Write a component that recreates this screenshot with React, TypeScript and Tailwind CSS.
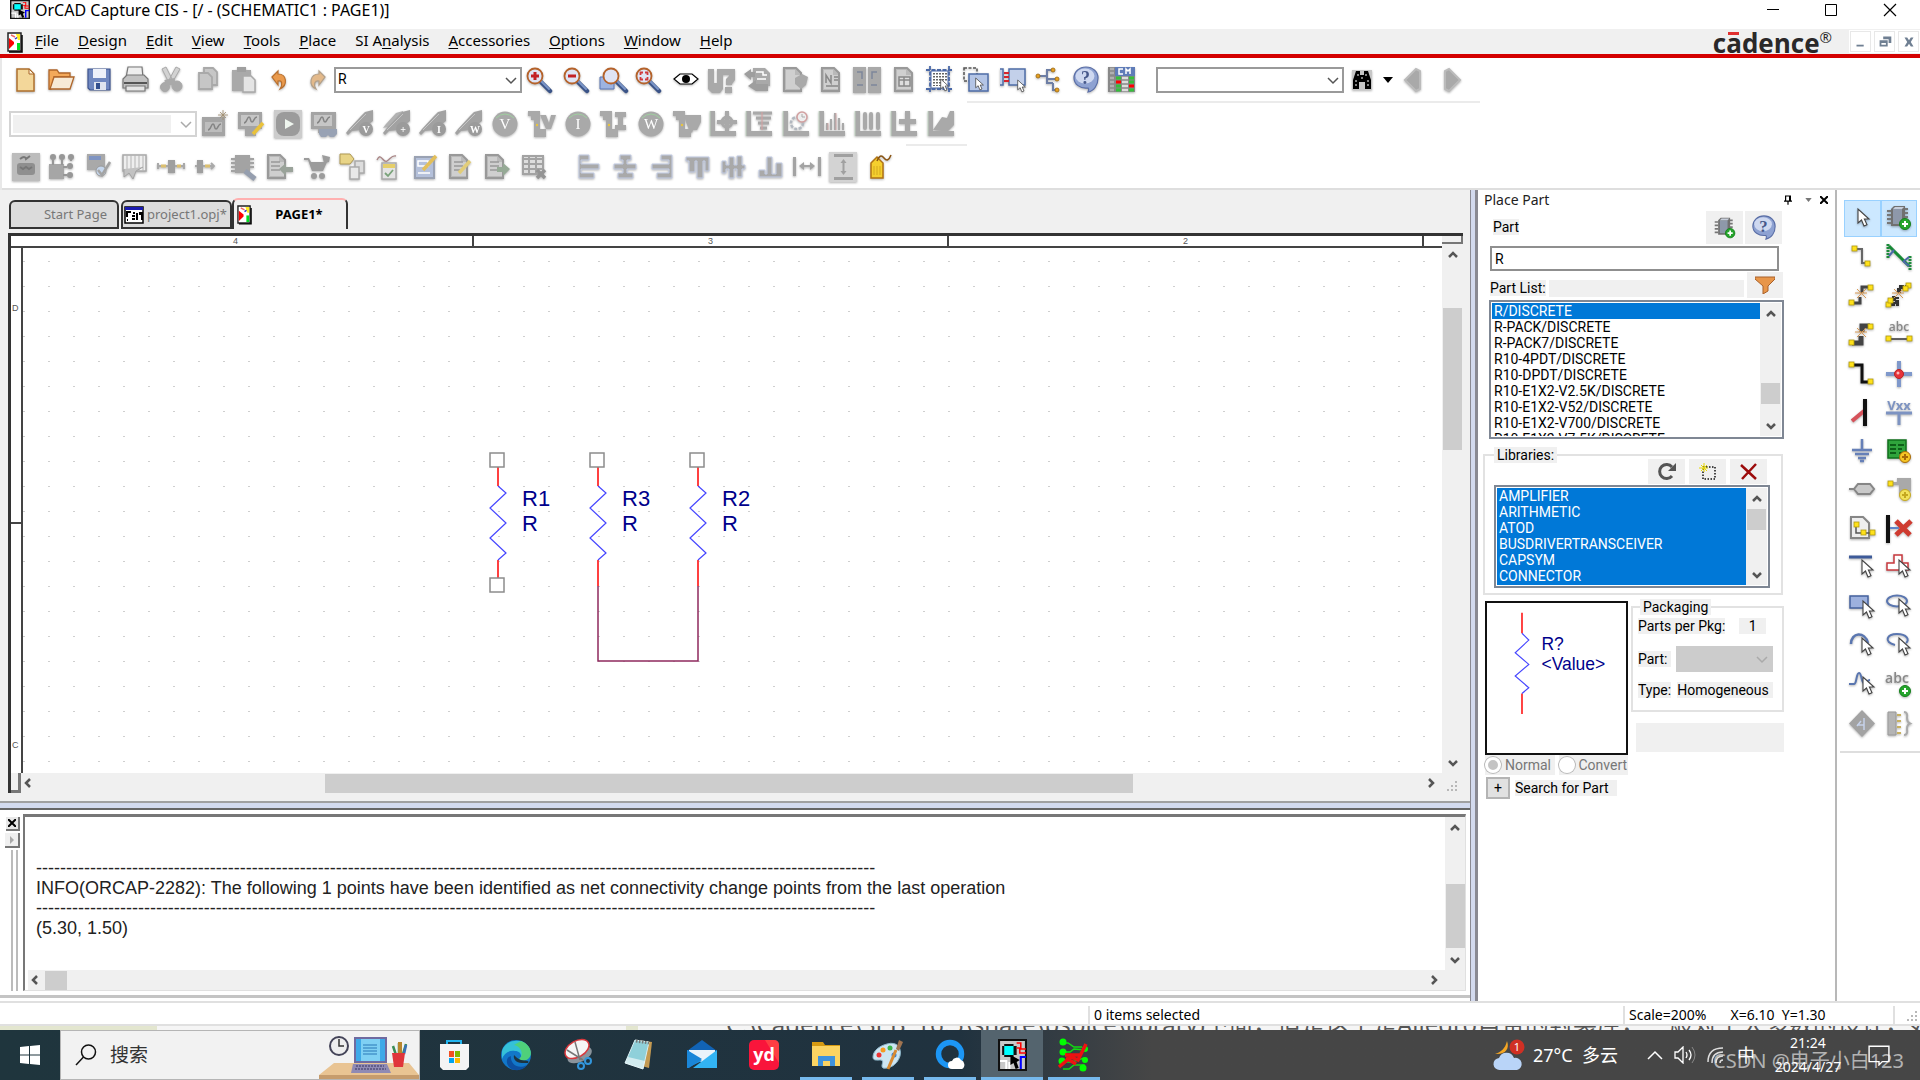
import type { ReactNode } from 'react';

const G = '#a9a9a9';
const UI = "font-['Noto_Sans','Open_Sans',sans-serif]";
const PANEL = "font-['Roboto','Liberation_Sans',sans-serif] text-[14px]";
const CJK = "font-['Noto_Sans','Noto_Sans_CJK_SC',sans-serif]";

/* ---------- shared icon fragments ---------- */

const Cursor = ({ x = 12, y = 6 }: { x?: number; y?: number }) => (
  <path
    transform={`translate(${x} ${y})`}
    d="M1 0v14l3.5-3 2.5 6 3-1.3-2.6-5.7H12z"
    fill="#fff"
    stroke="#444"
    strokeWidth="1.1"
  />
);

const Lens = ({ children, x = 9 }: { children?: ReactNode; x?: number }) => (
  <g>
    <path d={`M${x + 6} 16l9 9`} stroke="#3b5488" strokeWidth="4.500" strokeLinecap="round" />
    <path d={`M${x + 6} 15l8 8`} stroke="#7b95c8" strokeWidth="2" strokeLinecap="round" />
    <circle cx={x} cy="10" r="7.500" fill="#dfe4f5" stroke="#b5622a" strokeWidth="1.800" />
    {children}
  </g>
);

const Sq = ({ x, y }: { x: number; y: number }) => (
  <rect x={x} y={y} width="5" height="5" fill="#ffe11a" stroke="#b09a10" strokeWidth=".8" />
);

const Probe = ({ t }: { t: string }) => (
  <g>
    <path d="M0 23l3-4L15 6l4-4 8-2v11L15 20l-9 1-4 4z" fill="#a2a2a2" />
    <path d="M4 20L20 4" stroke="#c4c4c4" strokeWidth="1" />
    <circle cx="20" cy="19" r="7" fill="#9b9b9b" />
    <text x="20" y="23" textAnchor="middle" fontSize="10" fontWeight="700" fill="#fff" fontFamily="Liberation Serif">
      {t}
    </text>
  </g>
);

const Round = ({ t }: { t: string }) => (
  <g>
    <circle cx="14" cy="14" r="12.500" fill={G} />
    <path d="M5 8q9-8 18 0" fill="none" stroke="#9fd09f" strokeWidth="1" />
    <text x="14" y="19" textAnchor="middle" fontSize="15" fill="#fff" fontFamily="Liberation Serif">
      {t}
    </text>
  </g>
);

const Branch = ({ children }: { children: ReactNode }) => (
  <g fill={G}>
    <path d="M0 1h12v18h6v8H6V10H3V6H0z" />
    <circle cx="9" cy="15" r="1.200" fill="#e8c440" />
    {children}
  </g>
);

const Axis = ({ children }: { children: ReactNode }) => (
  <g fill={G}>
    <path d="M1 1h5v20h21v5H1z" />
    <path d="M1 1v25" stroke="#c5dcc5" strokeWidth=".8" />
    {children}
  </g>
);

const Page = ({ children, x = 5 }: { children?: ReactNode; x?: number }) => (
  <g>
    <path d={`M${x} 2h12l5 5v18H${x}z`} fill="#b9b9b9" stroke="#999" strokeWidth="2" />
    <path d={`M${x + 2} 4h9v5h5v14H${x + 2}z`} fill="#cfcfcf" />
    {children}
  </g>
);

const Chip = ({ c = '#8e98aa' }: { c?: string }) => (
  <g>
    <path d="M2 7h4M2 11h4M2 15h4M2 19h4M19 5h4M19 9h4M19 13h4" stroke="#777" strokeWidth="2" />
    <path d="M6 5l3-3h11v17l-3 3H6z" fill="#707070" />
    <path d="M8 5h9v15H8z" fill={c} />
    <path d="M8 5h9l2-2H10z" fill="#c7cedb" />
  </g>
);

const Plus = ({ x, y, c = '#25a52c', s = '#fff' }: { x: number; y: number; c?: string; s?: string }) => (
  <g>
    <circle cx={x} cy={y} r="5.500" fill={c} stroke={s === '#fff' ? '#15801c' : s} strokeWidth="1" />
    <path d={`M${x - 3} ${y}h6M${x} ${y - 3}v6`} stroke={s} strokeWidth="2" />
  </g>
);

const Help = () => (
  <g>
    <path d="M14 1c7 0 12 5 12 11 0 7-4 13-10 14 1-2 1-3 0-4C8 23 2 18 2 12S7 1 14 1z" fill="#8ea2d2" stroke="#5a6ea6" strokeWidth="1.200" />
    <ellipse cx="13" cy="10" rx="9.500" ry="7.500" fill="#dfe6f7" opacity=".8" />
    <text x="13.500" y="18" textAnchor="middle" fontSize="18" fontWeight="700" fill="#46588a" fontFamily="Liberation Serif">
      ?
    </text>
  </g>
);

const icons: Record<string, ReactNode> = {
  New: (
    <g>
      <path d="M5 3h12l5 5v17H5z" fill="#f3d79a" stroke="#b0722f" strokeWidth="1.500" />
      <path d="M17 3v5h5z" fill="#fff5dc" stroke="#a8672c" />
    </g>
  ),
  Open: (
    <g stroke="#b0662a" strokeWidth="1.300">
      <path d="M1 4h8l2 3h11v4H6L3 23H1z" fill="#f3a95a" />
      <path d="M6 11h20l-4 12H2z" fill="#f7ead6" />
    </g>
  ),
  Save: (
    <g>
      <path d="M3 3h22v21H5l-2-2z" fill="#7088c0" stroke="#3c5490" strokeWidth="1.200" />
      <path d="M8 3h13v9H8z" fill="#eef1fa" />
      <path d="M9 16h12v8H9z" fill="#dfe4ef" />
      <path d="M11 17h4v6h-4z" fill="#33508f" />
    </g>
  ),
  Print: (
    <g stroke="#777" strokeWidth="1.200">
      <path d="M7 1h14l1 11H5z" fill="#eee" />
      <path d="M2 13l4-4h17l4 4v9H2z" fill="#c2c2c2" />
      <path d="M5 20h19v5H5z" fill="#e6e6e6" />
      <path d="M3 17h23" stroke="#555" strokeWidth="2" />
    </g>
  ),
  Cut: (
    <g fill={G} stroke={G}>
      <path d="M5 3l4-2 6 12-3 4zM23 3l-4-2-7 13 3 3z" fill="#d2d2d2" />
      <circle cx="8" cy="21" r="4.500" />
      <circle cx="20" cy="20" r="5" />
      <path d="M8 17l10-2" strokeWidth="6" />
    </g>
  ),
  Copy: (
    <g fill="#c6c6c6" stroke="#a9a9a9" strokeWidth="1.800">
      <path d="M11 2h9l4 4v13H11z" />
      <path d="M6 7h9l4 4v12H6z" />
    </g>
  ),
  Paste: (
    <g>
      <path d="M3 4h19v21H3z" fill={G} />
      <path d="M8 1h9v5H8z" fill="#9f9f9f" />
      <path d="M14 10h8l4 4v12H14z" fill="#e4e4e4" stroke={G} strokeWidth="1.500" />
    </g>
  ),
  Undo: <path d="M6 11l6-6v3c9 0 10 11 2 15 3-5 2-9-2-8v4z" fill="#ea9a4c" stroke="#b8702f" strokeWidth="1.200" />,
  Redo: <path d="M23 11l-6-6v3c-9 0-11 11-3 15-3-5-1-9 3-8v4z" fill="#e3b98a" stroke="#b3a089" strokeWidth="1.200" />,
  'Zoom In': (
    <Lens>
      <path d="M5 10h8M9 6v8" stroke="#c32026" strokeWidth="3" />
    </Lens>
  ),
  'Zoom Out': (
    <Lens>
      <path d="M5 10h8" stroke="#c32026" strokeWidth="3" />
    </Lens>
  ),
  'Zoom to Region': (
    <g>
      <path d="M1 11h14v12H1z" fill="#9db3e0" stroke="#5b77b5" />
      <Lens x={12} />
    </g>
  ),
  'Zoom to All': (
    <Lens>
      <path d="M5.500 9V6.500H8M10 6.500h2.500V9M12.500 11v2.500H10M8 13.500H5.500V11" fill="none" stroke="#d0383e" strokeWidth="1.800" />
    </Lens>
  ),
  View: (
    <g>
      <path d="M2 13l6-5h12l6 5-6 5H8z" fill="#fff" stroke="#000" strokeWidth="1.200" />
      <circle cx="14" cy="13" r="4" />
    </g>
  ),
  Annotate: (
    <g fill={G}>
      <path d="M0 3h6v14h3V3h6v20l-3 4H4l-4-4zM15 3h12v11l-3 4v1h-6v-6l3-3V9h-6zM17 21h7v6h-7z" />
    </g>
  ),
  'Back Annotate': (
    <g>
      <path d="M9 2h12l5 5v13H9z" fill={G} />
      <path d="M12 6h7v3h4M13 13h9" stroke="#fff" strokeWidth="1.500" fill="none" />
      <path d="M0 8l7-5v3h4v5H7v3zM4 20l8-6v4h12v7H12z" fill="#9e9e9e" />
    </g>
  ),
  'Design Rules': (
    <Page x={3}>
      <path d="M14 12l7-4 6 3-2 8-5 4-6-5z" fill={G} />
    </Page>
  ),
  Netlist: (
    <Page>
      <path d="M9 17V9l5 8V9M17 11h4M17 14h4M9 20h12" stroke="#888" strokeWidth="1.500" fill="none" />
    </Page>
  ),
  'Cross Reference': (
    <g fill={G}>
      <path d="M0 1h13v26H0zM15 1h13v26H15z" />
      <path d="M4 6h5v7M24 6h-5v7M4 19h6M18 19h6" stroke="#7d869a" strokeWidth="1.500" fill="none" />
    </g>
  ),
  'Bill of Materials': (
    <Page>
      <path d="M9 11h11v9H9zM9 14h11M14 11v9" stroke="#888" strokeWidth="1.500" fill="#ddd" />
    </Page>
  ),
  'Snap to Grid': (
    <g>
      <path d="M4 0v27M23 0v27M0 4h27M0 23h27" stroke="#4a69a8" strokeWidth="1.800" strokeDasharray="4 1.500" />
      <path d="M5 5h17v17H5z" fill="#fff" stroke="#4a69a8" />
      <path d="M8 7v13M11 7v13M14 7v13M17 7v13M20 7v8" stroke="#333" strokeWidth="1.500" strokeDasharray="1.500 1.500" />
      <g transform="translate(14 13) scale(.7)">
        <Cursor x={0} y={0} />
      </g>
    </g>
  ),
  'Area Select': (
    <g>
      <path d="M2 2h13v13H2z" fill="none" stroke="#555" strokeWidth="1.500" strokeDasharray="3 1.500" />
      <path d="M7 8h19v17H7z" fill="#b4c5e6" stroke="#4f6da8" strokeWidth="1.500" />
      <g transform="translate(13 12) scale(.7)">
        <Cursor x={0} y={0} />
      </g>
    </g>
  ),
  'Drag Connected': (
    <g>
      <path d="M1 3h3v16H1M26 3H10v16h16z" fill="#c3d0ea" stroke="#4f6da8" strokeWidth="1.500" />
      <path d="M5 7h5M5 11h5M5 15h5" stroke="#d6242c" strokeWidth="1.800" />
      <g transform="translate(18 14) scale(.7)">
        <Cursor x={0} y={0} />
      </g>
    </g>
  ),
  Hierarchy: (
    <g>
      <path d="M3 10h9M18 4h-6v13h6M12 13h10M18 17v7h4" fill="none" stroke="#6d7ea5" strokeWidth="2" />
      <g fill="#e6a020" stroke="#9c6810" strokeWidth=".8">
        <circle cx="3" cy="10" r="2" />
        <circle cx="18" cy="4" r="2" />
        <circle cx="22" cy="13" r="2" />
        <circle cx="22" cy="24" r="2" />
      </g>
    </g>
  ),
  Help: <Help />,
  'Constraint Manager': (
    <g>
      <path d="M0 1h27v25H0z" fill="#888" />
      <path d="M7 1h20v9H7z" fill="#5f7cb8" />
      <path d="M15 3h-4v5h4M18 8V3l2 2 2-2v5" stroke="#fff" strokeWidth="1.500" fill="none" />
      <path d="M2 3h4M2 7h4M2 12h4M2 16h4M2 20h4M2 24h4" stroke="#b0b0b0" strokeWidth="2.500" />
      <path d="M8 12h5M8 20h5M8 24h5M21 12h5M21 16h5M21 24h5" stroke="#35bf3b" strokeWidth="2.800" />
      <path d="M14 12h6M14 16h6M14 20h6M14 24h6" stroke="#ddd" strokeWidth="2.500" />
      <path d="M8 16h5M21 20h5" stroke="#f00" strokeWidth="2.800" />
    </g>
  ),
  Find: (
    <g>
      <path d="M4 4h20v20H4z" fill="#c6c6c6" />
      <path d="M8 5h4v4h4V5h4l3 9v9h-6v-7h-6v7H5v-9z" />
      <path d="M8 14v7M20 14v7M10 8v3M18 8v3M13 12h2" stroke="#fff" strokeDasharray="2 2" />
    </g>
  ),
  Previous: <path d="M5 14L16 3l4 2v18l-4 2z" fill={G} stroke="#bbb" strokeWidth="2" />,
  Next: <path d="M23 14L12 3 8 5v18l4 2z" fill={G} stroke="#bbb" strokeWidth="2" />,

  'New Simulation': (
    <g>
      <path d="M1 7h23v19H1z" fill="#a4a4a4" />
      <path d="M4 12h17v10H4z" fill="#bdbdbd" />
      <path d="M7 20c3 0 3-6 5-6s1 5 3 5 2-5 5-5" fill="none" stroke="#848484" strokeWidth="1.500" />
      <path d="M22 0v10M17 5h10M19 2l6 6M25 2l-6 6" stroke="#a08c6c" strokeWidth=".8" />
    </g>
  ),
  'Edit Simulation': (
    <g>
      <path d="M1 2h24v17H1zM8 19h11v7H8z" fill="#a4a4a4" />
      <path d="M4 5h18v11H4z" fill="#c6c6c6" />
      <path d="M7 13c3 0 3-6 5-6s1 5 3 5 2-5 5-5" fill="none" stroke="#848484" strokeWidth="1.500" />
      <path d="M16 24l10-11" stroke="#eac23a" strokeWidth="3.500" />
    </g>
  ),
  Run: (
    <g>
      <path d="M0 0h28v28H0z" fill="#cccccc" />
      <rect x="2" y="2" width="24" height="24" rx="8" fill="#9b9b9b" />
      <path d="M11 9l9 5-9 5z" fill="#eef5ee" />
    </g>
  ),
  'View Results': (
    <g>
      <path d="M1 2h25v17H1zM8 19h9v4H8z" fill="#a4a4a4" />
      <path d="M4 5h18v11H4z" fill="#c6c6c6" />
      <path d="M7 13c3 0 3-6 5-6s1 5 3 5 2-5 5-5" fill="none" stroke="#848484" strokeWidth="1.500" />
      <path d="M9 19h18v5l-3 3h-4l-2-2-2 2h-5l-2-3z" fill="#98a2b4" />
    </g>
  ),
  'Voltage Marker': <Probe t="V" />,
  'Differential Marker': (
    <g>
      <path d="M0 18l3-4L13 3l7-2v10L9 17l-5 0z" fill="#b2b2b2" />
      <Probe t="+" />
    </g>
  ),
  'Current Marker': <Probe t="I" />,
  'Power Marker': <Probe t="W" />,
  'Bias Voltage': <Round t="V" />,
  'Toggle Voltage': (
    <Branch>
      <path d="M12 5h6l3 8 2-8h5l-5 14h-5z" />
    </Branch>
  ),
  'Bias Current': <Round t="I" />,
  'Toggle Current': (
    <Branch>
      <path d="M15 2h11v5h-3v8h3v5H15v-5h3V7h-3z" />
    </Branch>
  ),
  'Bias Power': <Round t="W" />,
  'Toggle Power': (
    <Branch>
      <path d="M11 5h17v7l-4 8h-4l-1 3-3-3-3-8z" />
    </Branch>
  ),
  'Plot Crosshair': (
    <Axis>
      <circle cx="18" cy="12" r="5" fill="none" stroke={G} strokeWidth="3" />
      <path d="M16 1h4v22h-4zM8 10h20v4H8z" />
    </Axis>
  ),
  'Plot Sweep': (
    <Axis>
      <path d="M8 3h19M11 8h15M13 13h11M15 18h7" stroke={G} strokeWidth="3" />
      <path d="M17 2v18" stroke="#d8a0a0" strokeWidth="1" />
    </Axis>
  ),
  'Plot Timed': (
    <Axis>
      <circle cx="15" cy="13" r="6" fill="none" stroke="#b2b8c0" strokeWidth="2.500" strokeDasharray="3 1.500" />
      <circle cx="20" cy="7" r="5" fill="#eee" stroke="#d3a0a0" strokeWidth="1.500" />
      <path d="M20 4v3h3" fill="none" stroke="#aaa" />
    </Axis>
  ),
  'Plot Bars': (
    <Axis>
      <path d="M9 20v-7M13 20V9M17 20V3M21 20V8M25 20v-7" stroke={G} strokeWidth="2" />
      <path d="M10 20v-7M18 20V3" stroke="#d8a5a5" strokeWidth=".8" />
    </Axis>
  ),
  'Plot Columns': (
    <Axis>
      <path d="M11 18V4M17 18V4M24 18V4" stroke={G} strokeWidth="4" strokeLinecap="round" />
    </Axis>
  ),
  'Plot Add': (
    <Axis>
      <path d="M15 1h5v8h6v5h-6v7h-5v-7H9V9h6z" />
    </Axis>
  ),
  'Plot Probe': (
    <Axis>
      <path d="M6 20L15 7l5 1 3-7h4v14l-6 6h-6z" />
    </Axis>
  ),

  'Part Manager': (
    <g>
      <path d="M0 0h28v28H0z" fill="#bcbcbc" />
      <rect x="5" y="10" width="18" height="12" rx="3" fill="#8f8f8f" />
      <path d="M8 6q5-4 6 0l4-3M8 14l3 2 3-2 3 2 3-2" fill="none" stroke="#777" strokeWidth="2" />
    </g>
  ),
  'Link Database': (
    <g fill="#a6a6a6">
      <path d="M1 11h15v15H1z" />
      <g fill="#979797">
        <circle cx="5" cy="4" r="3" />
        <circle cx="14" cy="4" r="3" />
        <circle cx="23" cy="4" r="3" />
        <circle cx="22" cy="13" r="3" />
        <circle cx="22" cy="22" r="3" />
      </g>
      <path d="M5 7v5M14 7v5M15 14h4M15 22h4M23 4v4" stroke="#979797" strokeWidth="2" />
    </g>
  ),
  'Verify Part': (
    <g>
      <path d="M2 1h18v16H2z" fill={G} />
      <path d="M4 3h12v4H4z" fill="#7f94c2" />
      <circle cx="16" cy="18" r="5" fill="#c5d6ec" stroke="#999" />
      <path d="M13 17l4 5 8-13" fill="none" stroke="#a3a3a3" strokeWidth="2.500" />
    </g>
  ),
  'Edit Table': (
    <g>
      <path d="M2 2h23v16H2z" fill="#eee" stroke="#a9a9a9" strokeWidth="1.500" />
      <path d="M6 2v16M10 2v16M14 2v16M18 2v16M22 2v16" stroke="#b4b4b4" strokeWidth="1" />
      <path d="M3 16v8l5-4 4 6 3-8 7-4" fill="#c2c2c2" stroke="#a3a3a3" />
    </g>
  ),
  'Add Component': (
    <g>
      <path d="M0 13h28M1 10v6M27 10v6" stroke={G} strokeWidth="2" />
      <path d="M11 7h7v13h-7z" fill="#9f9f9f" />
      <path d="M4 13h5M20 13h4" stroke="#dcc070" strokeWidth="3" />
    </g>
  ),
  'Place Component': (
    <g>
      <path d="M1 13h19M17 10l3 3-3 3" stroke={G} strokeWidth="1.800" fill="none" />
      <path d="M3 7h6v13H3z" fill="#9f9f9f" />
      <path d="M11 13h5" stroke="#dcc070" strokeWidth="3" />
    </g>
  ),
  'Search Part': (
    <g>
      <path d="M1 6h4M1 10h4M1 14h4M1 18h4M20 6h4M20 10h4M20 14h4" stroke="#a3a3a3" strokeWidth="2" />
      <path d="M5 2h15v18H5z" fill="#a3a3a3" />
      <path d="M15 18l10 8" stroke="#959eae" strokeWidth="5" />
    </g>
  ),
  'Import Sheet': (
    <Page x={2}>
      <path d="M5 9h9M5 13h9M5 17h9" stroke="#999" strokeWidth="1.500" />
      <path d="M13 16l7-6v4h7v5h-7v4z" fill="#9aa39a" />
    </Page>
  ),
  Cart: (
    <g fill="#9c9c9c">
      <path d="M1 5h5l2 4h16l-4 9H9L5 7H1z" />
      <circle cx="11" cy="23" r="3" />
      <circle cx="19" cy="23" r="3" />
      <path d="M19 2l8 2-1 5-5 1z" />
    </g>
  ),
  'Tag Copy': (
    <g>
      <path d="M1 1h10l4 5-4 5H1z" fill="#e8d487" stroke="#b09a55" />
      <path d="M16 8h9v12h-9z" fill="#ddd" stroke="#aaa" strokeWidth="1.500" />
      <path d="M11 14h9v12h-9z" fill="#e8e8e8" stroke="#aaa" strokeWidth="1.500" />
    </g>
  ),
  'Check Wave': (
    <g>
      <path d="M2 7c4-9 6 4 10 1s5-6 9-5" fill="none" stroke="#a98585" strokeWidth="1.300" />
      <path d="M7 10h14v16H7z" fill="#e4e4e4" stroke="#aaa" strokeWidth="1.500" />
      <path d="M8 11h12v4H8z" fill="#e6cf6a" />
      <path d="M10 20l3 3 5-6" fill="none" stroke="#7aa37a" strokeWidth="1.800" />
    </g>
  ),
  'Edit Schematic': (
    <g>
      <path d="M3 4h19v21H3z" fill="#b4c0da" stroke="#9aa2b3" strokeWidth="2" />
      <path d="M6 8h10v5H6zM6 20h12" stroke="#fff" fill="none" strokeWidth="1.500" />
      <path d="M11 17L24 3" stroke="#e3bf5a" strokeWidth="3.500" />
    </g>
  ),
  'Edit Sheet': (
    <Page x={2}>
      <path d="M6 9h9M6 13h9M6 17h6" stroke="#999" strokeWidth="1.500" />
      <path d="M11 20L22 8" stroke="#e2cd78" strokeWidth="3.500" />
    </Page>
  ),
  'Export Sheet': (
    <Page x={2}>
      <path d="M6 9h9M6 13h9M6 17h9" stroke="#999" strokeWidth="1.500" />
      <path d="M26 16l-7-6v4h-6v5h6v4z" fill="#96aa96" />
    </Page>
  ),
  'Delete Table': (
    <g>
      <path d="M2 3h20v18H2z" fill="#ddd" stroke="#a3a3a3" strokeWidth="2" />
      <path d="M2 6h20M2 11h20M2 16h20M8 3v18M15 3v18" stroke="#a3a3a3" strokeWidth="2" />
      <path d="M16 17l8 8M24 17l-8 8" stroke="#949494" strokeWidth="3.500" />
    </g>
  ),

  'Align Left': <path d="M4 2h10v5H6v4h18v5H6v4h13v5H4z" fill={G} stroke="#c3cde6" strokeWidth="1" />,
  'Align Center': <path d="M9 2h11v5h-4v4h9v5h-9v4h6v5H7v-5h5v-4H3v-5h9V7H9z" fill={G} stroke="#c3cde6" strokeWidth="1" />,
  'Align Right': <path d="M24 2H13v5h8v4H4v5h17v4H9v5h15z" fill={G} stroke="#c3cde6" strokeWidth="1" />,
  'Align Top': <path d="M2 4h23v14h-4V8h-2v17h-6V8h-2v11H5V8H2z" fill={G} stroke="#c3cde6" strokeWidth="1" />,
  'Align Middle': <path d="M2 8h4v4h3V4h5v8h3V3h5v9h3v4h-3v8h-5v-8h-3v9H9v-9H6v4H2z" fill={G} stroke="#c3cde6" strokeWidth="1" />,
  'Align Bottom': <path d="M2 24v-7h6v4h2V4h5v17h4V10h6v14z" fill={G} stroke="#c3cde6" strokeWidth="1" />,
  'Distribute Horizontally': (
    <g fill="#a3a3a3">
      <path d="M0 4h3v19H0zM25 4h3v19h-3zM6 13l5-4v3h6V9l5 4-5 4v-3h-6v3z" />
    </g>
  ),
  'Distribute Vertically': (
    <g>
      <path d="M0-1h28v30H0z" fill="#d3d3d3" />
      <path d="M5 1h19v3H5zM5 24h19v3H5zM14.500 6l3 4h-2v8h2l-3 4-3-4h2v-8h-2z" fill="#a0a0a0" />
    </g>
  ),
  Tag: (
    <g>
      <path d="M5 10l6-6 6 6v15H5z" fill="#f5cf2e" stroke="#b07314" strokeWidth="1.500" />
      <path d="M11 8q3-8 7-3t7-3" fill="none" stroke="#8a5514" strokeWidth="1.500" />
      <path d="M8 13v9M11 13v9M14 13v9" stroke="#d5a91f" />
    </g>
  ),
};

const palette: { name: string; art: ReactNode }[] = [
  { name: 'Select', art: <Cursor x={9} y={5} /> },
  { name: 'Place part', art: <g><Chip /><Plus x={20} y={20} /></g> },
  { name: 'Place wire', art: <g><path d="M8 6h6v14h6" fill="none" stroke="#666" strokeWidth="2" /><Sq x={4} y={3} /><Sq x={17} y={18} /></g> },
  { name: 'Auto wire two points', art: <g><path d="M3 1v14M25 13v14" stroke="#1b8c3a" strokeWidth="3" strokeDasharray="2 1" /><path d="M4 3l20 20" stroke="#178a35" strokeWidth="3" /><path d="M4 13l5-6M24 14l-6 5M24 23l-6-5" stroke="#4c69a8" strokeWidth="2" /></g> },
  { name: 'Auto wire multi', art: <g><path d="M5 21h7v-6M14 11V5h8" fill="none" stroke="#444" strokeWidth="3" /><path d="M7 11h12M9 7l9 9M18 7l-9 9" stroke="#d89a55" /><Sq x={1} y={18} /><Sq x={20} y={3} /></g> },
  { name: 'Auto wire bus', art: <g><path d="M5 22h7v-7M14 11V5h8M9 19v-6" fill="none" stroke="#333" strokeWidth="4" strokeDasharray="5 1" /><path d="M7 11h12M9 7l9 9M18 7l-9 9" stroke="#d89a55" /><Sq x={1} y={20} /><Sq x={3} y={16} /><Sq x={21} y={1} /><Sq x={18} y={4} /></g> },
  { name: 'Place connection', art: <g><path d="M4 22h9v-7M14 11V5h8" fill="none" stroke="#444" strokeWidth="5" /><path d="M7 11h12M9 7l9 9M18 7l-9 9" stroke="#d89a55" /><Sq x={1} y={19} /><Sq x={20} y={3} /></g> },
  { name: 'Place net alias', art: <g><text x="14" y="10" textAnchor="middle" fontSize="12" fontWeight="600" fill="#888" fontFamily="Open Sans">abc</text><path d="M5 18h18" stroke="#333" strokeWidth="1.500" /><Sq x={1} y={15} /><Sq x={22} y={15} /></g> },
  { name: 'Place bus', art: <g><path d="M5 5h9v17h9" fill="none" stroke="#111" strokeWidth="3" /><Sq x={1} y={2} /><Sq x={20} y={19} /></g> },
  { name: 'Place junction', art: <g><path d="M14 1v26M1 14h26" stroke="#7f98cb" strokeWidth="4" /><circle cx="14" cy="14" r="4.500" fill="#e8323a" stroke="#b22" /><circle cx="13" cy="13" r="1.500" fill="#fbb" /></g> },
  { name: 'Place bus entry', art: <g><path d="M4 22L16 12" stroke="#d6525a" strokeWidth="4" /><path d="M17 0v27" stroke="#111" strokeWidth="4" /></g> },
  { name: 'Place power', art: <g><text x="14" y="11" textAnchor="middle" fontSize="13" fontWeight="700" fill="#7d93c2" fontFamily="Open Sans">Vxx</text><path d="M1 14h26M14 14v12" stroke="#7d93c2" strokeWidth="3" /></g> },
  { name: 'Place ground', art: <path d="M14 1v11M4 12h20M7 16h14M10 20h8M12 23h4" stroke="#6680b8" strokeWidth="2.500" /> },
  { name: 'Place hierarchical block', art: <g><path d="M3 2h18v18H3z" fill="#2fa43c" stroke="#11701c" strokeWidth="1.500" /><path d="M5 7h6M5 11h6M13 7h6M13 11h4M5 15h6M14 15h3" stroke="#0d5f18" fill="none" strokeWidth="2" /><Plus x={20} y={19} c="#f6c624" s="#a86a08" /></g> },
  { name: 'Place port', art: <path d="M1 13h5l4-5h12l4 5-4 5H10l-4-5" fill="#c9c9c9" stroke="#868686" strokeWidth="2" /> },
  { name: 'Place pin', art: <g><path d="M8 6h4V2h14v13l-3 3h-9V9H8z" fill={G} /><Sq x={3} y={5} /><Plus x={20} y={19} c="#f2e25c" s="#c5a820" /></g> },
  { name: 'Place off-page connector', art: <g><path d="M3 2h12l6 6v15H3z" fill="#eee" stroke="#868686" strokeWidth="2" /><path d="M8 11v7h16" fill="none" stroke="#555" strokeWidth="1.500" /><Sq x={6} y={7} /><Sq x={13} y={15} /><Sq x={22} y={15} /></g> },
  { name: 'Place no connect', art: <g><path d="M3 0v28" stroke="#111" strokeWidth="4" /><path d="M5 13h9" stroke="#5f84c8" strokeWidth="2" /><path d="M11 6l14 14M26 6L11 20" stroke="#cf3b30" strokeWidth="5" /></g> },
  { name: 'Place line', art: <g><path d="M1 3h23" stroke="#3d5a99" strokeWidth="3" /><Cursor x={13} /></g> },
  { name: 'Place polyline', art: <g><path d="M9 1h8v8h6v7H2V9h7z" fill="#fff" stroke="#c8383e" strokeWidth="1.500" /><Cursor x={13} /></g> },
  { name: 'Place rectangle', art: <g><path d="M2 3h18v12H2z" fill="#9db1de" stroke="#44619f" strokeWidth="1.500" /><Cursor x={14} y={8} /></g> },
  { name: 'Place ellipse', art: <g><ellipse cx="12" cy="8" rx="10" ry="5.500" fill="none" stroke="#5a76b0" strokeWidth="2" /><Cursor x={13} /></g> },
  { name: 'Place arc', art: <g><path d="M3 12C3 0 17-1 20 11" fill="none" stroke="#5a76b0" strokeWidth="2.500" /><Cursor x={13} /></g> },
  { name: 'Place elliptical arc', art: <g><path d="M10 13C-2 10 2 2 12 2s13 6 9 9" fill="none" stroke="#5a76b0" strokeWidth="2" /><Cursor x={13} /></g> },
  { name: 'Place bezier', art: <g><path d="M1 13h5C9 13 8 2 11 2s2 10 5 10 3-3 6-3" fill="none" stroke="#5a76b0" strokeWidth="2" /><Cursor x={14} /></g> },
  { name: 'Place text', art: <g><text x="12" y="12" textAnchor="middle" fontSize="14" fontWeight="600" fill="#888" fontFamily="Open Sans">abc</text><Plus x={20} y={20} /></g> },
  { name: 'Place IEEE symbol', art: <g><path d="M14 0l13 13.500L14 27 1 13.500z" fill="#a3a3a3" /><path d="M9 15h7M16 8v12M13 11l-4 5" stroke="#c6d2ea" strokeWidth="1.500" /></g> },
  { name: 'Place pin array', art: <g><path d="M3 2h8v23H3z" fill="#b4b4b4" stroke="#999" /><path d="M12 5h4M12 11h4M12 17h4M12 23h4" stroke="#c7b060" strokeWidth="2" /><path d="M19 2q4 0 3 6 0 4 3 5.500-3 1-3 5.500 1 6-3 6" fill="none" stroke="#aaa" strokeWidth="2" /></g> },
];

const Art = ({ children }: { children: ReactNode }) => (
  <svg viewBox="0 0 28 28" className="size-7 overflow-visible drop-shadow-[0_1px_1px_rgba(0,0,0,0.3)]" aria-hidden="true">
    {children}
  </svg>
);

const Tool = ({ name }: { name: string }) => (
  <button aria-label={name} className="flex h-9 min-w-0 flex-1 items-center justify-center">
    <Art>{icons[name]}</Art>
  </button>
);

const Tools = ({ names, className }: { names: string[]; className: string }) => (
  <div className={`flex shrink-0 items-center ${className}`}>
    {names.map((n) => (
      <Tool key={n} name={n} />
    ))}
  </div>
);

const Chevron = ({ dir, className = '' }: { dir: 'up' | 'down' | 'left' | 'right'; className?: string }) => {
  const d = {
    up: 'M3 10l4-4 4 4',
    down: 'M3 5l4 4 4-4',
    left: 'M9 3L5 7l4 4',
    right: 'M5 3l4 4-4 4',
  }[dir];
  return (
    <svg viewBox="0 0 14 14" className={`size-[14px] shrink-0 ${className}`} aria-hidden="true">
      <path d={d} fill="none" stroke="#555" strokeWidth="2.500" />
    </svg>
  );
};

const Combo = ({ label, value, disabled }: { label: string; value: string; disabled?: boolean }) => (
  <div className={`relative flex h-[26px] w-[188px] shrink-0 border-2 bg-white ${disabled ? 'border-[#d4d4d4]' : 'border-[#9a9a9a]'}`}>
    <select
      aria-label={label}
      disabled={disabled}
      className={`min-w-0 flex-1 appearance-none px-[2px] ${PANEL} ${disabled ? 'm-[2px] mr-6 bg-[#f0f0f0]' : 'bg-white'}`}
    >
      <option>{value}</option>
    </select>
    <svg viewBox="0 0 12 12" className="pointer-events-none absolute top-[6px] right-[3px] size-3" aria-hidden="true">
      <path d="M1 3l5 5 5-5" fill="none" stroke={disabled ? '#aaa' : '#555'} strokeWidth="1.500" />
    </svg>
  </div>
);

const VBar = ({ before, thumb, after, className = '' }: { before: string; thumb: string; after: string; className?: string }) => (
  <div className={`flex shrink-0 flex-col items-center bg-[#f0f0f0] ${className}`}>
    <div className="flex h-5 items-center"><Chevron dir="up" /></div>
    <div className={before} />
    <div className={`w-[19px] bg-[#cdcdcd] ${thumb}`} />
    <div className={after} />
    <div className="flex h-5 items-center"><Chevron dir="down" /></div>
  </div>
);

const HBar = ({ before, thumb, after }: { before: string; thumb: string; after: string }) => (
  <div className="flex h-5 min-w-0 flex-1 items-center bg-[#f0f0f0]">
    <Chevron dir="left" className="mr-[3px]" />
    <div className={before} />
    <div className={`h-[19px] bg-[#cdcdcd] ${thumb}`} />
    <div className={after} />
    <Chevron dir="right" className="mr-1" />
  </div>
);

const Grip = ({ className = '' }: { className?: string }) => (
  <svg viewBox="0 0 11 11" className={`size-[11px] shrink-0 ${className}`} aria-hidden="true">
    <path d="M8 0h2v2H8zM4 4h2v2H4zM8 4h2v2H8zM0 8h2v2H0zM4 8h2v2H4zM8 8h2v2H8z" fill="#b8b8b8" />
  </svg>
);

const OrcadGlyph = ({ className }: { className: string }) => (
  <svg viewBox="0 0 28 32" className={className} preserveAspectRatio="none" aria-hidden="true">
    <path d="M1 1h26v30H1z" fill="#c8c8c8" stroke="#111" strokeWidth="2" />
    <path d="M6 5h9v2h3v9h-3v2H6v-2H4V7h2z" fill="#111" />
    <path d="M6 7h9v9H6z" fill="#0ff" />
    <path d="M18 4h4v6h5M18 9h3v5h6" stroke="#f00" strokeWidth="1.500" fill="none" />
    <path d="M22 30V18h5" stroke="#00f" strokeWidth="2" fill="none" />
    <path d="M2 22h6v8M11 23v7" stroke="#fff" strokeWidth="2" fill="none" />
    <path d="M12 16l9 5-3 2 2 6-3 1-2-6-3 2z" />
  </svg>
);

const PageGlyph = ({ className }: { className: string }) => (
  <svg viewBox="0 0 16 22" className={className} aria-hidden="true">
    <path d="M1 20V2h13v18z" fill="#fff" stroke="#222" strokeWidth="1.500" />
    <path d="M2 7l5 4v2l-5 5z" fill="#f00" />
    <path d="M4 4l4 2" stroke="#e66" strokeWidth="1.500" />
    <path d="M8 8l3-2" stroke="#33c" strokeWidth="1.500" />
    <path d="M9 3h4v6h-2z" fill="#fe2" />
    <path d="M10 12h3v7h-3z" fill="#0d2" />
    <path d="M2 21h13V4" stroke="#000" strokeWidth="1.500" fill="none" />
  </svg>
);

/* ---------- schematic ---------- */

const Resistor = ({ x, name, open }: { x: number; name: string; open?: boolean }) => (
  <g fill="none">
    <path d={`M${x} 219v19M${x} 312v${open ? 18 : 26}`} stroke="#ff4040" strokeWidth="2" />
    <path d={`M${x} 238l8 7-16 15 16 15-16 15 16 15-8 7`} stroke="#4646ff" strokeWidth="1.200" />
    <rect x={x - 8} y="205" width="14" height="14" fill="#fff" stroke="#8c8c8c" strokeWidth="1.500" />
    {open && <rect x={x - 8} y="330" width="14" height="14" fill="#fff" stroke="#8c8c8c" strokeWidth="1.500" />}
    <g fill="#00008b" fontSize="22" fontFamily="Liberation Sans">
      <text x={x + 24} y="258">{name}</text>
      <text x={x + 24} y="283">R</text>
    </g>
  </g>
);

const Schematic = () => (
  <svg className="min-h-0 min-w-0 flex-1 bg-white" role="img" aria-label="Schematic page">
    <defs>
      <pattern id="dots" width="25" height="25" patternUnits="userSpaceOnUse" y="12">
        <rect width="2" height="1" x="0" y="1" fill="#cfcfcf" />
      </pattern>
    </defs>
    <rect width="100%" height="100%" fill="url(#dots)" />
    <Resistor x={475} name="R1" open />
    <Resistor x={575} name="R3" />
    <Resistor x={675} name="R2" />
    <path d="M575 338v75h100v-75" fill="none" stroke="#8e2a5e" strokeWidth="1.500" />
  </svg>
);

const menus: [string, string, string][] = [
  ['', 'F', 'ile'],
  ['', 'D', 'esign'],
  ['', 'E', 'dit'],
  ['', 'V', 'iew'],
  ['', 'T', 'ools'],
  ['', 'P', 'lace'],
  ['SI A', 'n', 'alysis'],
  ['', 'A', 'ccessories'],
  ['', 'O', 'ptions'],
  ['', 'W', 'indow'],
  ['', 'H', 'elp'],
];

const TitleBar = () => (
  <header className={`flex h-[29px] shrink-0 items-start bg-white pl-[10px] text-[16px] leading-5 text-black ${UI}`}>
    <OrcadGlyph className="mr-[5px] h-[19px] w-5" />
    <h1 className="flex-1">OrCAD Capture CIS - [/ - (SCHEMATIC1 : PAGE1)]</h1>
    <div className="flex items-center">
      <button aria-label="Minimize" className="flex h-5 w-[58px] items-center justify-center">
        <svg viewBox="0 0 14 14" className="size-[14px]"><path d="M1 6.500h12" stroke="#000" /></svg>
      </button>
      <button aria-label="Maximize" className="flex h-5 w-[58px] items-center justify-center">
        <svg viewBox="0 0 14 14" className="size-[14px]"><path d="M1.500 1.500h11v11h-11z" fill="none" stroke="#000" /></svg>
      </button>
      <button aria-label="Close" className="flex h-5 w-[60px] items-center justify-center">
        <svg viewBox="0 0 14 14" className="size-[14px]"><path d="M1 1l12 12M13 1L1 13" stroke="#000" strokeWidth="1.200" /></svg>
      </button>
    </div>
  </header>
);

const MenuBar = () => (
  <nav className={`flex h-[29px] shrink-0 items-center border-b-4 border-[#d40000] bg-[#f0f0f0] text-[15px] text-black ${UI}`}>
    <PageGlyph className="mr-3 ml-[7px] h-[22px] w-4" />
    <div className="flex flex-1 gap-[19px] pb-1">
      {menus.map(([a, b, c]) => (
        <button key={b + c} className="leading-5 whitespace-nowrap">
          {a}
          <span className="underline underline-offset-2">{b}</span>
          {c}
        </button>
      ))}
    </div>
    <div className="flex h-full items-end pr-[17px] font-['Open_Sans',sans-serif] text-[#2a2829]">
      <span className="text-[26px] leading-[22px] font-bold">
        c
        <span className="relative">
          a<span className="absolute top-[7px] left-[2px] h-[3px] w-[11px] bg-[#e03030]" />
        </span>
        dence
      </span>
      <span className="self-start text-[15px] leading-4">®</span>
    </div>
    <div className="flex gap-[3px] bg-white p-[1px]">
      {['M5 15h8v-2H5z', 'M8 4h9v7h-3V7H8zM4 8h9v7H4zm2 3v2h5v-2z', 'M5 5h3l2 3 2-3h3l-3 5 3 5h-3l-2-3-2 3H5l3-5z'].map((d, i) => (
        <button
          key={d}
          aria-label={['Minimize page', 'Restore page', 'Close page'][i]}
          className="flex size-[21px] items-center justify-center border border-[#e8e8e8] bg-white"
        >
          <svg viewBox="0 0 20 20" className="size-[18px]"><path d={d} fill="#6f7f92" fillRule="evenodd" /></svg>
        </button>
      ))}
    </div>
  </nav>
);

const Toolbars = () => (
  <section aria-label="Toolbars" className="flex shrink-0 flex-col border-l-2 border-[#e8e8e8] bg-white">
    <div className="flex h-[43px] items-center pl-[6px]">
      <Tools className="w-[326px]" names={['New', 'Open', 'Save', 'Print', 'Cut', 'Copy', 'Paste', 'Undo', 'Redo']} />
      <Combo label="Place part name" value="R" />
      <Tools
        className="w-[618px]"
        names={['Zoom In', 'Zoom Out', 'Zoom to Region', 'Zoom to All', 'View', 'Annotate', 'Back Annotate', 'Design Rules', 'Netlist', 'Cross Reference', 'Bill of Materials', 'Snap to Grid', 'Area Select', 'Drag Connected', 'Hierarchy', 'Help', 'Constraint Manager']}
      />
      <div className="w-4" />
      <Combo label="Find text" value="" />
      <Tools className="w-9" names={['Find']} />
      <button aria-label="Find options" className="flex w-4 justify-center">
        <svg viewBox="0 0 10 6" className="h-[6px] w-[10px]"><path d="M0 0h10L5 6z" /></svg>
      </button>
      <Tools className="w-[73px]" names={['Previous', 'Next']} />
    </div>
    <div className="ml-[965px] h-[2px] w-[513px] bg-[#ebebeb]" />
    <div className="flex h-[41px] items-center pl-[7px]">
      <Combo label="Simulation profile" value="" disabled />
      <Tools
        className="w-[762px]"
        names={['New Simulation', 'Edit Simulation', 'Run', 'View Results', 'Voltage Marker', 'Differential Marker', 'Current Marker', 'Power Marker', 'Bias Voltage', 'Toggle Voltage', 'Bias Current', 'Toggle Current', 'Bias Power', 'Toggle Power', 'Plot Crosshair', 'Plot Sweep', 'Plot Timed', 'Plot Bars', 'Plot Columns', 'Plot Add', 'Plot Probe']}
      />
    </div>
    <div className="ml-[904px] h-[2px] w-[61px] bg-[#ebebeb]" />
    <div className="flex h-11 items-center gap-[18px] border-b-2 border-[#dedede] pl-[6px]">
      <Tools
        className="w-[545px]"
        names={['Part Manager', 'Link Database', 'Verify Part', 'Edit Table', 'Add Component', 'Place Component', 'Search Part', 'Import Sheet', 'Cart', 'Tag Copy', 'Check Wave', 'Edit Schematic', 'Edit Sheet', 'Export Sheet', 'Delete Table']}
      />
      <Tools
        className="w-[327px]"
        names={['Align Left', 'Align Center', 'Align Right', 'Align Top', 'Align Middle', 'Align Bottom', 'Distribute Horizontally', 'Distribute Vertically', 'Tag']}
      />
    </div>
  </section>
);

const Tabs = () => (
  <div role="tablist" className={`flex h-[31px] items-end pl-[9px] text-[13px] ${UI}`}>
    <button role="tab" aria-selected="false" className="flex h-[29px] w-[110px] items-center justify-end rounded-t-md border-2 border-[#333] bg-[#dcdcdc] pr-[10px] text-[#777]">
      Start Page
    </button>
    <button role="tab" aria-selected="false" className="ml-[2px] flex h-[29px] w-[111px] items-center gap-[3px] rounded-t-md border-2 border-[#333] bg-[#dcdcdc] pl-[1px] whitespace-nowrap text-[#777]">
      <svg viewBox="0 0 20 18" className="h-[18px] w-5 shrink-0" aria-hidden="true">
        <path d="M1 1h18v16H1z" fill="#fff" stroke="#000" strokeWidth="1.500" />
        <path d="M1 1h18v3H1z" fill="#1a1ab0" />
        <path d="M2 6h5M3 6v5M9 7h2M8 10h3M8 13h3M13 7v7M16 6v3M18 6v8M3 14h1" stroke="#000" strokeWidth="2" />
      </svg>
      project1.opj*
    </button>
    <button role="tab" aria-selected="true" className="flex h-[31px] w-[116px] items-center rounded-t-md border-2 border-b-0 border-[#333] border-t-[#ffb0b0] bg-[#f0f0f0] pl-[3px] font-bold text-black">
      <PageGlyph className="h-[21px] w-[15px]" />
      <span className="flex-1 text-center">PAGE1*</span>
    </button>
  </div>
);

const Document = () => (
  <section className="flex min-h-0 flex-1 flex-col border-b-2 border-[#a0a0a0] bg-[#f0f0f0] pt-2">
    <Tabs />
    <div className="mt-1 mr-[7px] mb-2 ml-2 flex min-h-0 flex-1 border-t-[3px] border-l-[3px] border-[#333] bg-white font-['Liberation_Sans',sans-serif] text-[9px] leading-none text-[#555]">
      <div className="flex min-w-0 flex-1 flex-col">
        <div className="flex h-3 shrink-0 border-b-2 border-[#444] pl-[12px] text-center">
          <div className="w-[451px] shrink-0 border-r-2 border-[#444] pt-[1px] pr-6">4</div>
          <div className="w-[475px] shrink-0 border-r-2 border-[#444] pt-[1px]">3</div>
          <div className="w-[475px] shrink-0 border-r-2 border-[#444] pt-[1px]">2</div>
        </div>
        <div className="flex min-h-0 flex-1">
          <div className="flex w-3 shrink-0 flex-col border-r-2 border-[#444]">
            <div className="h-[276px] shrink-0 border-b-2 border-[#444] pt-14 pl-[1px]">D</div>
            <div className="flex-1 pt-[217px] pl-[1px]">C</div>
          </div>
          <Schematic />
        </div>
        <div className="flex h-5 shrink-0">
          <div className="w-[10px] border-r-[3px] border-b-[3px] border-[#777] bg-[#f0f0f0]" />
          <HBar before="flex-[286]" thumb="flex-[806]" after="flex-[290]" />
        </div>
      </div>
      <div className="flex w-[21px] shrink-0 flex-col bg-[#f0f0f0]">
        <div className="h-2 shrink-0 border-r-2 border-b-2 border-[#777]" />
        <VBar className="min-h-0 w-full flex-1" before="flex-[44]" thumb="flex-[141]" after="flex-[302]" />
        <div className="flex h-5 shrink-0 items-end justify-center pb-[1px]"><Grip /></div>
      </div>
    </div>
  </section>
);

const DASHES = '-'.repeat(140);

const Output = () => (
  <section aria-label="Session log" className="flex h-[193px] shrink-0 flex-col border-t-2 border-[#666] bg-white">
    <div className="flex min-h-0 flex-1 pt-1 pr-1">
      <div className="flex w-[23px] shrink-0 flex-col items-end gap-[2px] pt-[3px] pr-[3px]">
        <button aria-label="Close log" className="flex size-[14px] items-center justify-center border-r-2 border-b-2 border-[#777] bg-[#e8e8e8]">
          <svg viewBox="0 0 8 8" className="size-2"><path d="M0 0l8 8M8 0L0 8" stroke="#000" strokeWidth="2" /></svg>
        </button>
        <button aria-label="Expand log" className="flex size-[15px] items-center justify-center border-r-2 border-b-2 border-[#777] bg-[#f0f0f0]">
          <svg viewBox="0 0 6 8" className="h-2 w-[6px]"><path d="M1 0l4 4-4 4z" fill="#aaa" /></svg>
        </button>
        <div className="mr-[2px] w-[7px] flex-1 border-x-2 border-[#bbb]" />
      </div>
      <div className="flex min-w-0 flex-1 border-t-[3px] border-r border-b border-l-2 border-[#e0e0e0] border-t-[#777] border-l-[#777]">
        <div className="flex min-w-0 flex-1 flex-col">
          <div className="min-h-0 flex-1 pt-[41px] pl-[11px] font-['Liberation_Sans',sans-serif] text-[18px] leading-5 whitespace-nowrap text-[#222]">
            <p>{DASHES}</p>
            <p>INFO(ORCAP-2282): The following 1 points have been identified as net connectivity change points from the last operation</p>
            <p>{DASHES}</p>
            <p>(5.30, 1.50)</p>
          </div>
          <div className="flex h-5 shrink-0 pl-[3px]">
            <HBar before="w-0" thumb="w-[22px]" after="flex-1" />
          </div>
        </div>
        <div className="flex bg-[#f0f0f0] pb-5">
          <VBar className="w-5" before="flex-[47]" thumb="flex-[65]" after="flex-[2]" />
        </div>
      </div>
    </div>
    <div className="mt-1 mb-[3px] h-[3px] bg-[#c4c4c4]" />
  </section>
);

const parts = ['R/DISCRETE', 'R-PACK/DISCRETE', 'R-PACK7/DISCRETE', 'R10-4PDT/DISCRETE', 'R10-DPDT/DISCRETE', 'R10-E1X2-V2.5K/DISCRETE', 'R10-E1X2-V52/DISCRETE', 'R10-E1X2-V700/DISCRETE', 'R10-E1X2-V7.5K/DISCRETE'];
const libraries = ['AMPLIFIER', 'ARITHMETIC', 'ATOD', 'BUSDRIVERTRANSCEIVER', 'CAPSYM', 'CONNECTOR'];

const PlacePart = () => (
  <aside aria-label="Place Part" className={`flex w-[359px] shrink-0 flex-col overflow-hidden border-r-2 border-[#b8b8b8] bg-white leading-4 text-black ${PANEL}`}>
    <div className="flex h-[21px] items-center pr-[7px] pb-[2px] pl-[6px]">
      <h2 className={`flex-1 text-[14px] text-[#222] ${UI}`}>Place Part</h2>
      <button aria-label="Pin">
        <svg viewBox="0 0 10 12" className="h-[10px] w-2"><path d="M2 7V1h6v6M7 1v6M0 7.500h10M5 8v4" fill="none" stroke="#000" strokeWidth="1.500" /></svg>
      </button>
      <button aria-label="Panel menu" className="ml-[13px]">
        <svg viewBox="0 0 8 5" className="h-1 w-[7px]"><path d="M0 0h8L4 5z" fill="#777" /></svg>
      </button>
      <button aria-label="Close panel" className="ml-2">
        <svg viewBox="0 0 8 8" className="size-2"><path d="M0 0l8 8M8 0L0 8" stroke="#000" strokeWidth="2" /></svg>
      </button>
    </div>
    <div className="flex h-[33px] items-start gap-[2px] pl-[15px]">
      <label htmlFor="part" className="mt-2 mr-auto bg-[#f0f0f0]">Part</label>
      <button aria-label="Place part" className="flex h-[33px] w-[37px] items-center justify-center bg-[#f0f0f0]">
        <svg viewBox="0 0 28 28" className="size-6"><Chip /><Plus x={20} y={20} /></svg>
      </button>
      <button aria-label="Help" className="mr-[53px] flex h-[33px] w-[37px] items-center justify-center bg-[#f0f0f0]">
        <svg viewBox="0 0 28 28" className="size-[26px]"><Help /></svg>
      </button>
    </div>
    <input id="part" defaultValue="R" className="mt-[2px] ml-3 h-[25px] w-[289px] border-2 border-[#8f8f8f] px-[3px]" />
    <div className="ml-3 flex h-[29px] w-[293px] items-end">
      <span id="part-list" className="mb-1 bg-[#f0f0f0] whitespace-nowrap">Part List:</span>
      <div className="mr-[3px] mb-[3px] ml-[3px] h-[17px] flex-1 bg-[#f0f0f0]" />
      <button aria-label="Filter" className="mb-[2px] flex h-[26px] w-9 items-center justify-center bg-[#f0f0f0]">
        <svg viewBox="0 0 20 18" className="h-[18px] w-5"><path d="M0 1h20v2l-7 7v5l-5 3v-8L0 3z" fill="#e8964a" stroke="#a8602a" strokeWidth="1" /></svg>
      </button>
    </div>
    <div className="ml-[11px] flex h-[139px] w-[295px] shrink-0 border-2 border-[#7f8794] p-[1px]">
      <ul role="listbox" aria-labelledby="part-list" className="min-w-0 flex-1 overflow-hidden">
        {parts.map((p, i) => (
          <li key={p} role="option" aria-selected={i === 0} className={`pl-[2px] ${i === 0 ? 'bg-[#0078d7] text-white' : ''}`}>
            {p}
          </li>
        ))}
      </ul>
      <VBar className="w-[21px]" before="flex-[61]" thumb="flex-[22]" after="flex-[12]" />
    </div>
    <fieldset className="mt-2 ml-[5px] w-[300px] border-2 border-[#e2e2e2] pl-[9px]">
      <legend className="bg-[#f0f0f0] px-[3px]">Libraries:</legend>
      <div className="-mt-[4px] flex justify-end gap-1 pr-[14px]">
        <button aria-label="Refresh libraries" className="flex h-[25px] w-[37px] items-center justify-center bg-[#f0f0f0]">
          <svg viewBox="0 0 20 20" className="size-5"><path d="M15 14a7 7 0 1 1 0-9" fill="none" stroke="#555" strokeWidth="3" /><path d="M19 1v8h-8z" fill="#555" /></svg>
        </button>
        <button aria-label="Add library" className="flex h-[25px] w-[37px] items-center justify-center bg-[#f0f0f0]">
          <svg viewBox="0 0 18 18" className="size-[18px]"><path d="M4 4h12v12H4z" fill="none" stroke="#111" strokeWidth="1.500" strokeDasharray="1.500 1.500" /><path d="M5 0v9M0 5h9M2 2l6 6M8 2L2 8" stroke="#e8d800" /></svg>
        </button>
        <button aria-label="Remove library" className="flex h-[25px] w-[37px] items-center justify-center bg-[#f0f0f0]">
          <svg viewBox="0 0 18 18" className="size-[18px]"><path d="M1 2l15 14M16 1L2 16" stroke="#9c0b0b" strokeWidth="2.500" /></svg>
        </button>
      </div>
      <div className="mt-[1px] mb-[5px] flex h-[103px] w-[276px] border-2 border-[#7f8794] p-[1px]">
        <ul role="listbox" aria-label="Libraries" aria-multiselectable="true" className="min-w-0 flex-1 bg-[#0078d7] text-white">
          {libraries.map((l) => (
            <li key={l} role="option" aria-selected="true" className="pl-[2px]">{l}</li>
          ))}
        </ul>
        <VBar className="w-[21px]" before="flex-[1]" thumb="flex-[21]" after="flex-[35]" />
      </div>
    </fieldset>
    <div className="mt-[6px] flex pl-[7px]">
      <div className="shrink-0">
        <svg viewBox="0 0 143 154" className="h-[154px] w-[143px] border-2 border-[#111] bg-white" role="img" aria-label="Part preview">
          <path d="M36 10v21M36 93v21" stroke="#ff4040" strokeWidth="2" />
          <path d="M36 31l7 7-14 13 14 12-14 12 14 12-7 6" fill="none" stroke="#4646ff" strokeWidth="1.200" />
          <g fill="#00008b" fontSize="18" fontFamily="Liberation Sans">
            <text x="56" y="48">R?</text>
            <text x="56" y="69">&lt;Value&gt;</text>
          </g>
        </svg>
        <div className="flex gap-1 text-[#777]">
          <label className="flex h-5 flex-1 items-center gap-1 bg-[#f0f0f0]">
            <input type="radio" name="view" defaultChecked disabled className="size-4 appearance-none rounded-full border-[3px] border-white bg-[#c4c4c4] ring-1 ring-[#bbb]" />
            Normal
          </label>
          <label className="flex h-5 flex-1 items-center gap-1 bg-[#f0f0f0]">
            <input type="radio" name="view" disabled className="size-4 appearance-none rounded-full border-[3px] border-white bg-white ring-1 ring-[#bbb]" />
            Convert
          </label>
        </div>
      </div>
      <div className="ml-[3px] w-[153px]">
        <fieldset className="-mt-[2px] h-[113px] border-2 border-[#e2e2e2] pl-[5px]">
          <legend className="ml-[2px] bg-[#f0f0f0] px-[3px]">Packaging</legend>
          <div className="mt-[1px] flex h-5 items-center gap-[14px]">
            <span className="bg-[#f0f0f0]">Parts per Pkg:</span>
            <output className="h-4 w-[27px] bg-[#f0f0f0] text-center">1</output>
          </div>
          <div className="mt-[9px] flex h-[27px] items-center">
            <label htmlFor="section" className="w-[33px] bg-[#f0f0f0]">Part:</label>
            <div className="relative ml-[5px] flex">
              <select id="section" disabled className="h-[26px] w-[97px] appearance-none bg-[#cccccc]" />
              <svg viewBox="0 0 12 12" className="pointer-events-none absolute top-2 right-[5px] size-3"><path d="M1 3l5 5 5-5" fill="none" stroke="#aaa" strokeWidth="1.500" /></svg>
            </div>
          </div>
          <div className="mt-[10px] flex gap-[6px]">
            <span className="bg-[#f0f0f0]">Type:</span>
            <span className="w-[96px] bg-[#f0f0f0]">Homogeneous</span>
          </div>
        </fieldset>
        <div className="mt-[11px] ml-[5px] h-[29px] bg-[#f0f0f0]" />
      </div>
    </div>
    <div className="mt-[2px] flex items-center gap-[5px] pl-2">
      <button aria-label="Expand search" className="flex h-[22px] w-6 items-center justify-center border-2 border-[#b4b4b4] bg-[#e1e1e1]">+</button>
      <span className="bg-[#f0f0f0] pr-2">Search for Part</span>
    </div>
  </aside>
);

const Palette = () => (
  <aside aria-label="Draw toolbar" className="w-[83px] shrink-0 bg-white pt-[10px]">
    <div className="ml-[3px] border-b-2 border-[#dedede] pb-[9px]">
      <div className="ml-1 grid h-[542px] w-[73px] auto-rows-fr grid-cols-2 gap-y-[2px]">
        {palette.map((p, i) => (
          <button
            key={p.name}
            aria-label={p.name}
            className={`flex items-center justify-center ${i < 2 ? 'border border-[#99d1ff] bg-[#cce8ff]' : ''}`}
          >
            <Art>{p.art}</Art>
          </button>
        ))}
      </div>
    </div>
  </aside>
);

const StatusBar = () => (
  <footer className={`flex h-[25px] shrink-0 items-center border-y-2 border-[#e0e0e0] bg-white pt-[3px] text-[14px] leading-[18px] text-black ${UI}`}>
    <div className="flex-1" />
    <div className="w-[535px] border-l-2 border-[#e0e0e0] pl-[4px]">0 items selected</div>
    <div className="flex w-[272px] gap-6 border-x-2 border-[#e0e0e0] pl-[4px]">
      <span>Scale=200%</span>
      <span className="whitespace-pre">X=6.10  Y=1.30</span>
    </div>
    <div className="flex w-[25px] justify-end pt-[3px] pr-[2px]"><Grip /></div>
  </footer>
);

/* ---------- taskbar ---------- */

const apps: { name: string; state?: 'open' | 'active'; art: ReactNode }[] = [
  {
    name: 'Microsoft Store',
    art: (
      <g>
        <path d="M10 7V3h14v4" fill="none" stroke="#22b4ee" strokeWidth="2" />
        <path d="M3 6h29v23l-3 3H6l-3-3z" fill="#f4f4f4" />
        <path d="M12 13h5v6h-5z" fill="#f25022" /><path d="M18 13h5v6h-5z" fill="#7fba00" />
        <path d="M12 20h5v5h-5z" fill="#00a4ef" /><path d="M18 20h5v5h-5z" fill="#ffb900" />
      </g>
    ),
  },
  {
    name: 'Microsoft Edge',
    art: (
      <g>
        <circle cx="17" cy="17" r="15" fill="#1277c9" />
        <path d="M3 13C6 2 22-1 29 8c6 8 1 16-9 14 4-3 2-9-4-9-6-1-11 2-13 8z" fill="#35c1d8" />
        <path d="M22 3c9 3 13 13 7 18-3 2-8 2-9 0 5-4 3-12-5-14z" fill="#4fd07a" />
        <path d="M12 18c-1 8 7 14 16 9-4 6-13 7-18 2-4-5-2-10 2-11z" fill="#0d4fa0" />
        <path d="M15 17c-1 4 2 8 8 8h6c2-3-3-2-7-3-3-1-5-3-7-5z" fill="#1d3340" />
      </g>
    ),
  },
  {
    name: 'Snipping Tool',
    art: (
      <g>
        <ellipse cx="18" cy="18" rx="13" ry="7" fill="#8b949c" transform="rotate(-25 16 16)" />
        <ellipse cx="16" cy="11" rx="13" ry="8" fill="#f6f6f6" stroke="#d8383d" strokeWidth="1.500" transform="rotate(-30 16 11)" />
        <path d="M14 4l5 18M6 12l16 10" stroke="#777" strokeWidth="1.500" />
        <circle cx="20" cy="28" r="3" fill="none" stroke="#3296dc" strokeWidth="2" />
        <circle cx="27" cy="23" r="3" fill="none" stroke="#3296dc" strokeWidth="2" />
      </g>
    ),
  },
  {
    name: 'Notepad',
    art: (
      <g>
        <path d="M13 2l16 2-3 26-22-6z" fill="#c49a52" />
        <path d="M12 2l14 2-6 27-18-6z" fill="#8fd0da" stroke="#d8eef2" />
        <path d="M2 25l18 6 2-8-17-4z" fill="#fff" opacity=".6" />
        <path d="M13 3l13 2" stroke="#777" strokeWidth="3" strokeDasharray="1.500 1.500" />
      </g>
    ),
  },
  {
    name: 'Mail',
    art: (
      <g>
        <path d="M2 13L17 2l15 11z" fill="#1163b5" />
        <path d="M4 12h26v12H4z" fill="#eaf3fa" />
        <path d="M2 12l15 11L2 30z" fill="#2492e0" /><path d="M32 12L8 30h24z" fill="#32b4f4" /><path d="M2 12l15 9-13 9H2z" fill="#1a86d8" />
      </g>
    ),
  },
  {
    name: 'Youdao Dictionary',
    art: (
      <g>
        <rect x="2" y="2" width="30" height="30" rx="5" fill="#f9153b" />
        <path d="M18 2h9q5 0 5 5v18z" fill="#ff5a4a" opacity=".6" />
        <text x="17" y="23" textAnchor="middle" fontSize="18" fontWeight="700" fill="#fff" fontFamily="Open Sans">yd</text>
      </g>
    ),
  },
  {
    name: 'File Explorer',
    state: 'open',
    art: (
      <g>
        <path d="M3 4h11l2 3h15v4H3z" fill="#d69a12" />
        <path d="M3 8h28v20H3z" fill="#fcd462" />
        <path d="M9 28V18h17v10h-5v-5h-7v5z" fill="#3f92dc" />
      </g>
    ),
  },
  {
    name: 'Paint',
    state: 'open',
    art: (
      <g>
        <path d="M16 6c10-3 15 4 13 12-3 10-12 13-17 12-3-2 2-7-2-8-4 0-8 1-8-3C2 13 8 8 16 6z" fill="#cde5f2" stroke="#8fb8cc" />
        <circle cx="8" cy="17" r="2.500" fill="#e33" /><circle cx="12" cy="12" r="2.500" fill="#f59a23" /><circle cx="19" cy="10" r="2.500" fill="#3bb54a" /><circle cx="23" cy="17" r="2.500" fill="#2d7fd8" />
        <path d="M17 31l8-19" stroke="#d88a32" strokeWidth="3" /><path d="M25 11l3-9 4 2-4 9z" fill="#a07450" />
      </g>
    ),
  },
  {
    name: 'Browser',
    state: 'open',
    art: (
      <g>
        <circle cx="17" cy="16" r="11.500" fill="none" stroke="#1c96f5" strokeWidth="5.500" />
        <path d="M19 31a4 4 0 0 1 0-8 5 5 0 0 1 9-1 5 5 0 0 1 1 9z" fill="#fff" />
      </g>
    ),
  },
  { name: 'OrCAD Capture', state: 'active', art: <svg x="3" y="1" width="29" height="32"><OrcadGlyph className="h-full w-full" /></svg> },
  {
    name: 'PCB Editor',
    state: 'open',
    art: (
      <g>
        <path d="M5 5h6l6 4h8M5 14h8l4-3 11 1M5 24h10l12-4M6 31h6l5-4h10v4" stroke="#1d1" strokeWidth="1.500" fill="none" />
        <g fill="#0f0"><circle cx="6" cy="4" r="3.500" /><circle cx="6" cy="14" r="3.500" /><circle cx="5" cy="23" r="3.500" /><circle cx="28" cy="11" r="3" /><circle cx="28" cy="22" r="3" /><circle cx="26" cy="30" r="3.500" /></g>
        <path d="M2 29L14 19l7 3 8-16M9 20l10 6M8 17h16" stroke="#e11" strokeWidth="3.500" fill="none" />
      </g>
    ),
  },
];

const Taskbar = () => (
  <footer className={`relative flex h-[50px] shrink-0 items-stretch bg-linear-to-r from-[#1f353d] from-0% via-[#20323f] via-50% to-[#464646] to-60% text-white ${CJK}`}>
    <button aria-label="Start" className="flex w-[60px] shrink-0 items-center justify-center">
      <svg viewBox="0 0 20 20" className="size-5"><path d="M0 2l9-1v8.500H0zM10 1l10-1v9.500H10zM0 10.500h9V19l-9-1zM10 10.500h10V20l-10-1z" fill="#fff" /></svg>
    </button>
    <label className="flex w-[360px] shrink-0 items-center overflow-hidden border border-[#b5b5b5] bg-[#f2f2f2] pl-[14px] text-[#333]">
      <svg viewBox="0 0 22 22" className="size-[22px] shrink-0" aria-hidden="true"><circle cx="13.500" cy="8" r="7" fill="none" stroke="#111" strokeWidth="1.500" /><path d="M8.500 13L1 21" stroke="#111" strokeWidth="1.500" /></svg>
      <input aria-label="搜索" placeholder="搜索" className="ml-[13px] min-w-0 flex-1 text-[19px] placeholder:text-[#333]" />
      <svg viewBox="0 0 100 50" className="h-[50px] w-[100px] shrink-0" aria-hidden="true">
        <path d="M0 45l15-12h75l10 12v5H0z" fill="#e9c493" /><path d="M0 45h100v5H0z" fill="#c69c6d" />
        <circle cx="20" cy="16" r="9" fill="#eee" stroke="#444458" strokeWidth="2" /><path d="M20 9v7h5" stroke="#333" fill="none" strokeWidth="1.500" />
        <path d="M35 7h33v26H35z" fill="#6f6aa0" /><path d="M37 9h29v22H37z" fill="#3fa9e8" /><path d="M42 9h19v22H42z" fill="#7fd0f4" />
        <path d="M44 15h14M44 18h14M44 21h14M44 24h14" stroke="#2a78b8" />
        <path d="M34 34h34l4 9H32z" fill="#8f8ab4" /><path d="M37 36h28M36 39h31" stroke="#55507c" strokeWidth="1.500" strokeDasharray="2 1" />
        <path d="M77 25l-3-9M80 24V13M84 24l3-10" stroke="#3a8c55" strokeWidth="2.500" /><path d="M81 24V12" stroke="#b8862c" strokeWidth="4" /><path d="M85 24l2-9" stroke="#3a70b8" strokeWidth="2.500" />
        <path d="M73 23h13l-2 14h-9z" fill="#e0353b" />
      </svg>
    </label>
    <div className="ml-[3px] flex">
      {apps.map((a) => (
        <button
          key={a.name}
          aria-label={a.name}
          className={`relative flex w-[62px] items-center justify-center ${a.state === 'active' ? 'bg-[#54646e]' : ''}`}
        >
          <svg viewBox="0 0 34 34" className="size-[34px]" aria-hidden="true">{a.art}</svg>
          {a.state && <span className={`absolute bottom-0 h-[3px] bg-[#76b9ed] ${a.state === 'active' ? 'inset-x-0' : 'inset-x-[5px]'}`} />}
        </button>
      ))}
    </div>
    <div className="flex-1" />
    <button className="flex items-center gap-2 text-[18px]">
      <svg viewBox="0 0 32 32" className="size-8" aria-hidden="true">
        <path d="M14 2c3 8-2 14-12 13 6-2 10-5 12-13z" fill="#f5a623" />
        <path d="M7 31a6 6 0 0 1-1-12 8 8 0 0 1 15 0 6 6 0 0 1 3 12z" fill="#b9d4f8" />
        <circle cx="24" cy="8" r="7.500" fill="#d03024" />
        <text x="24" y="12" textAnchor="middle" fontSize="11" fill="#fff">1</text>
      </svg>
      <span>27°C&nbsp; 多云</span>
    </button>
    <div className="ml-7 flex items-center">
      <button aria-label="Hidden icons" className="w-[28px]"><svg viewBox="0 0 18 12" className="h-3 w-[18px]"><path d="M2 10l7-7 7 7" fill="none" stroke="#fff" strokeWidth="1.500" /></svg></button>
      <button aria-label="Volume" className="w-8">
        <svg viewBox="0 0 22 18" className="h-[18px] w-[22px]"><path d="M1 6h3l5-5v16l-5-5H1zM12 6q2 3 0 6M15 4q4 5 0 10" fill="none" stroke="#fff" strokeWidth="1.300" /><path d="M18 1q6 8 0 16" fill="none" stroke="#888" /></svg>
      </button>
      <button aria-label="Network" className="w-7">
        <svg viewBox="0 0 20 20" className="size-5"><path d="M2 17Q2 3 17 3M6 18Q6 7 17 7M10 18q0-7 7-7M14 18q0-3 3-3" fill="none" stroke="#ddd" strokeWidth="1.500" /></svg>
      </button>
      <button aria-label="输入法" className="w-6 text-[18px]">中</button>
    </div>
    <time className="ml-3 flex w-[76px] flex-col justify-center text-center text-[14px] leading-6">
      <span>21:24</span>
      <span>2024/4/27</span>
    </time>
    <button aria-label="Notifications" className="mr-[30px] ml-[22px] flex items-center">
      <svg viewBox="0 0 20 20" className="size-[22px]"><path d="M1 2h18v14h-6l-3 3v-3H1z" fill="none" stroke="#fff" strokeWidth="1.300" /></svg>
    </button>
    <span className="absolute right-4 bottom-[7px] text-[20px] leading-6 text-white/60">CSDN @电子小白123</span>
  </footer>
);

export default function App() {
  return (
    <div className="flex h-screen flex-col overflow-hidden bg-white">
      <TitleBar />
      <MenuBar />
      <Toolbars />
      <main className="flex min-h-0 flex-1">
        <div className="flex min-w-0 flex-1 flex-col">
          <Document />
          <div className="h-[5px] shrink-0 bg-[#d3daee]" />
          <Output />
        </div>
        <div className="w-2 shrink-0 border-r-[3px] border-l border-[#8a8a92] bg-[#d3daee]" />
        <PlacePart />
        <Palette />
      </main>
      <StatusBar />
      <div aria-hidden="true" className="flex h-[4px] shrink-0 overflow-hidden bg-[#f5f5f5]">
        <div className="w-[157px] shrink-0 bg-[#e3e6cf]" />
        <div className="ml-[469px] w-3 shrink-0 bg-[#e3e6cf]" />
        <div className={`-mt-4 ml-[88px] text-[24px] leading-7 whitespace-nowrap text-[#555] ${CJK}`}>
          C:\Cadence\SPB_16.5\share\pspice\library)下面，但是这个是Allegro自带的封装库，一般对于大多数的设计，如果说是
        </div>
      </div>
      <Taskbar />
    </div>
  );
}
